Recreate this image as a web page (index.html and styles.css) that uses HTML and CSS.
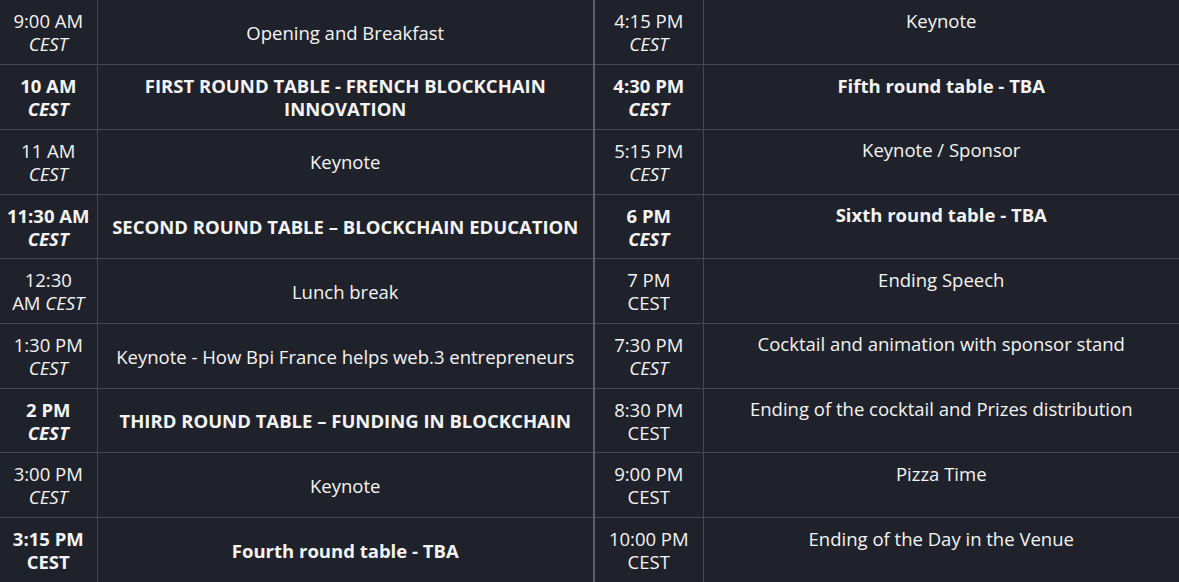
FILE: index.html
```html
<!DOCTYPE html>
<html lang="en">
<head>
    <meta charset="UTF-8">
    <meta name="viewport" content="width=device-width, initial-scale=1.0">
    <title>Schedule</title>
    <link rel="stylesheet" href="styles.css">
</head>
<body>
    <div class="schedule">
        <!-- Morning / afternoon -->
        <table class="day day-left">
            <tr>
                <td class="time">9:00 AM<br><em>CEST</em></td>
                <td class="event">Opening and Breakfast</td>
            </tr>
            <tr class="highlight">
                <td class="time">10 AM<br><em>CEST</em></td>
                <td class="event">FIRST ROUND TABLE - FRENCH BLOCKCHAIN<br>INNOVATION</td>
            </tr>
            <tr>
                <td class="time">11 AM<br><em>CEST</em></td>
                <td class="event">Keynote</td>
            </tr>
            <tr class="highlight">
                <td class="time">11:30 AM<br><em>CEST</em></td>
                <td class="event">SECOND ROUND TABLE – BLOCKCHAIN EDUCATION</td>
            </tr>
            <tr>
                <td class="time">12:30<br>AM <em>CEST</em></td>
                <td class="event">Lunch break</td>
            </tr>
            <tr>
                <td class="time">1:30 PM<br><em>CEST</em></td>
                <td class="event">Keynote - How Bpi France helps web.3 entrepreneurs</td>
            </tr>
            <tr class="highlight">
                <td class="time">2 PM<br><em>CEST</em></td>
                <td class="event">THIRD ROUND TABLE – FUNDING IN BLOCKCHAIN</td>
            </tr>
            <tr>
                <td class="time">3:00 PM<br><em>CEST</em></td>
                <td class="event">Keynote</td>
            </tr>
            <tr class="highlight">
                <td class="time">3:15 PM<br>CEST</td>
                <td class="event">Fourth round table - TBA</td>
            </tr>
        </table>

        <!-- Evening -->
        <table class="day day-right">
            <tr>
                <td class="time">4:15 PM<br><em>CEST</em></td>
                <td class="event">Keynote</td>
            </tr>
            <tr class="highlight">
                <td class="time">4:30 PM<br><em>CEST</em></td>
                <td class="event">Fifth round table - TBA</td>
            </tr>
            <tr>
                <td class="time">5:15 PM<br><em>CEST</em></td>
                <td class="event">Keynote / Sponsor</td>
            </tr>
            <tr class="highlight">
                <td class="time">6 PM<br><em>CEST</em></td>
                <td class="event">Sixth round table - TBA</td>
            </tr>
            <tr>
                <td class="time">7 PM<br>CEST</td>
                <td class="event">Ending Speech</td>
            </tr>
            <tr>
                <td class="time">7:30 PM<br><em>CEST</em></td>
                <td class="event">Cocktail and animation with sponsor stand</td>
            </tr>
            <tr>
                <td class="time">8:30 PM<br>CEST</td>
                <td class="event">Ending of the cocktail and Prizes distribution</td>
            </tr>
            <tr>
                <td class="time">9:00 PM<br>CEST</td>
                <td class="event">Pizza Time</td>
            </tr>
            <tr>
                <td class="time">10:00 PM<br>CEST</td>
                <td class="event">Ending of the Day in the Venue</td>
            </tr>
        </table>
    </div>
</body>
</html>
```

FILE: styles.css
```css
body, html {
    margin: 0;
    padding: 0;
    height: 100%;
    overflow: hidden;
    background-color: #1f222b;
    font-family: "Open Sans", Arial, sans-serif;
    color: #f4f4f4;
}
.schedule {
    display: flex;
}
.day {
    border-collapse: collapse;
    table-layout: fixed;
}
.day-left {
    width: 593px;
}
.day-right {
    width: 586px;
    border-left: 2px solid #5b5e66;
}
.day td {
    height: 64.7px;
    box-sizing: border-box;
    padding: 8.5px 4px 8px;
    border-bottom: 1px solid #464952;
    font-size: 18.5px;
    line-height: 23px;
    text-align: center;
}
.day tr:last-child td {
    border-bottom: none;
}
.day .time {
    border-right: 1px solid #464952;
}
.day-left .time {
    width: 97px;
}
.day-right .time {
    width: 109px;
}
.day-left .event {
    vertical-align: middle;
}
.day-right .event {
    vertical-align: top;
}
.day em {
    font-style: italic;
}
.highlight td {
    font-weight: 700;
}
```
